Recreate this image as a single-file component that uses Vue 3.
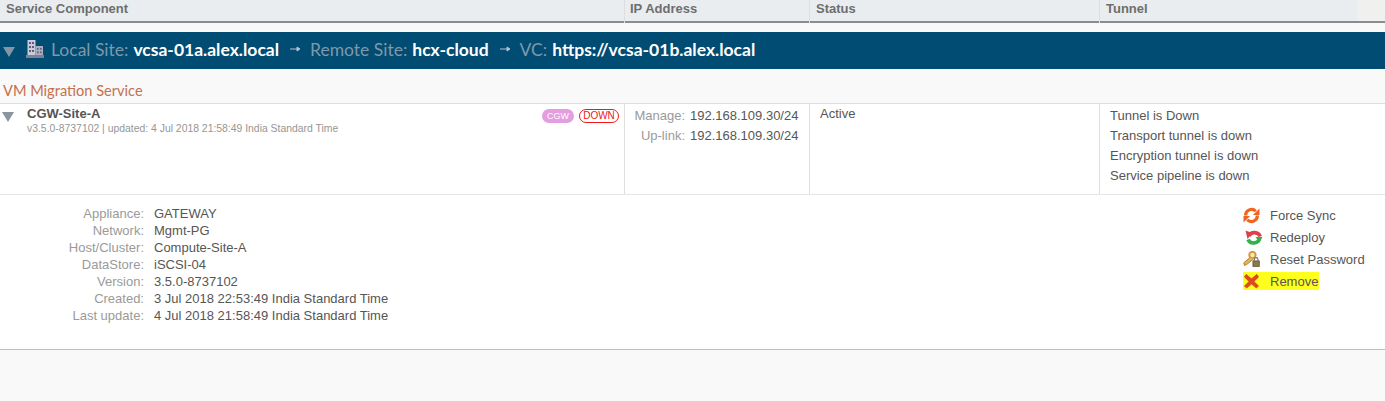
<script setup>
const headers = ['Service Component', 'IP Address', 'Status', 'Tunnel']
const tunnels = ['Tunnel is Down', 'Transport tunnel is down', 'Encryption tunnel is down', 'Service pipeline is down']
const details = [
  ['Appliance:', 'GATEWAY'],
  ['Network:', 'Mgmt-PG'],
  ['Host/Cluster:', 'Compute-Site-A'],
  ['DataStore:', 'iSCSI-04'],
  ['Version:', '3.5.0-8737102'],
  ['Created:', '3 Jul 2018 22:53:49 India Standard Time'],
  ['Last update:', '4 Jul 2018 21:58:49 India Standard Time'],
]
</script>

<template>
  <div class="page">
    <div class="head">
      <div class="cols">
        <div v-for="h in headers" :key="h" class="hcell">{{ h }}</div>
      </div>
    </div>

    <div class="banner">
      <span class="tri tri-banner"></span>
      <svg class="building" width="18" height="18" viewBox="0 0 18 18">
        <rect x="1.5" y="0" width="8" height="15" fill="#c9ccd6" />
        <rect x="9.5" y="6" width="7.5" height="9" fill="#a9adbd" />
        <rect x="0" y="15" width="18" height="3" fill="#7d8099" />
        <g fill="#5a5f80">
          <rect x="3" y="2" width="2" height="2" /><rect x="6" y="2" width="2" height="2" />
          <rect x="3" y="6" width="2" height="2" /><rect x="6" y="6" width="2" height="2" />
          <rect x="3" y="10" width="2" height="2" /><rect x="6" y="10" width="2" height="2" />
          <rect x="11" y="8" width="1.6" height="1.6" /><rect x="14" y="8" width="1.6" height="1.6" />
          <rect x="11" y="11.5" width="1.6" height="1.6" /><rect x="14" y="11.5" width="1.6" height="1.6" />
        </g>
      </svg>
      <span class="b-label">Local Site:</span>
      <span class="b-value">vcsa-01a.alex.local</span>
      <svg class="b-arrow" width="10" height="6" viewBox="0 0 10 6"><path d="M0 3 H9 M7 1 L10 3 L7 5 Z" stroke="#b3c2cc" fill="#b3c2cc" /></svg>
      <span class="b-label">Remote Site:</span>
      <span class="b-value">hcx-cloud</span>
      <svg class="b-arrow" width="10" height="6" viewBox="0 0 10 6"><path d="M0 3 H9 M7 1 L10 3 L7 5 Z" stroke="#b3c2cc" fill="#b3c2cc" /></svg>
      <span class="b-label">VC:</span>
      <span class="b-value">https://vcsa-01b.alex.local</span>
    </div>

    <div class="service-title">VM Migration Service</div>

    <div class="row">
      <div class="cell c-name">
        <span class="tri tri-row"></span>
        <div class="name-text">
          <div class="name">CGW-Site-A</div>
          <div class="sub">v3.5.0-8737102 | updated: 4 Jul 2018 21:58:49 India Standard Time</div>
        </div>
        <div class="badges">
          <span class="badge badge-cgw">CGW</span>
          <span class="badge badge-down">DOWN</span>
        </div>
      </div>
      <div class="cell c-ip">
        <div class="ip-line"><span class="ip-label">Manage:</span><span>192.168.109.30/24</span></div>
        <div class="ip-line"><span class="ip-label">Up-link:</span><span>192.168.109.30/24</span></div>
      </div>
      <div class="cell c-status">Active</div>
      <div class="cell c-tunnel">
        <div v-for="t in tunnels" :key="t" class="tunnel-line">{{ t }}</div>
      </div>
    </div>

    <div class="detail">
      <div class="facts">
        <template v-for="d in details" :key="d[0]">
          <span class="fact-label">{{ d[0] }}</span>
          <span class="fact-value">{{ d[1] }}</span>
        </template>
      </div>
      <div class="actions">
        <div class="action">
          <svg class="ic" width="17" height="17" viewBox="0 0 18 18" fill="none">
            <path d="M2.8 9 A6.2 6.2 0 0 1 13.5 4.5" stroke="#f0641e" stroke-width="3.4" />
            <path d="M10.5 8.5 L17.5 8.5 L17.5 1.5 Z" fill="#f0641e" />
            <path d="M15.2 9 A6.2 6.2 0 0 1 4.5 13.5" stroke="#f0641e" stroke-width="3.4" />
            <path d="M7.5 9.5 L0.5 9.5 L0.5 16.5 Z" fill="#f0641e" />
          </svg>
          <span>Force Sync</span>
        </div>
        <div class="action">
          <svg class="ic ic-shift" width="18" height="17" viewBox="0 0 18 17" fill="none">
            <path d="M4 7 A6 5.6 0 0 1 15.2 7.5" stroke="#d9424a" stroke-width="3.6" />
            <path d="M0.5 1.5 L7.5 4 L2.5 10 Z" fill="#d9424a" />
            <path d="M14.5 9 A6 5.6 0 0 1 3 10.5" stroke="#35b04a" stroke-width="3.6" />
            <path d="M10.5 8 L17.5 8 L14.5 13.5 Z" fill="#35b04a" />
          </svg>
          <span>Redeploy</span>
        </div>
        <div class="action">
          <svg class="ic" width="17" height="16" viewBox="0 0 18 17" fill="none">
            <circle cx="10" cy="4.2" r="3.4" stroke="#d29a3a" stroke-width="2" fill="#f7e6b0" />
            <path d="M8 6.5 L0.8 12.5 L1.5 15.5 L5 13.5 L10.5 9" fill="#e3b45a" stroke="#b07c26" stroke-width="1" />
            <rect x="10.5" y="10.5" width="6.8" height="6" fill="#8a7a4a" stroke="#5f5330" stroke-width="0.8" />
            <path d="M11.9 10.5 V9 A2 2 0 0 1 15.9 9 V10.5" stroke="#77705c" stroke-width="1.2" />
          </svg>
          <span>Reset Password</span>
        </div>
        <div class="action action-remove">
          <svg class="ic" width="16" height="16" viewBox="0 0 18 18">
            <path d="M3 1.5 L9 6.5 L15 1.5 L17 4.5 L11.8 9.5 L17 14.5 L14.5 17 L9 12.5 L3.5 17 L1 14.5 L6.2 9.5 L1 4.5 Z" fill="#e2491a" stroke="#b8391a" stroke-width="0.6" />
          </svg>
          <span>Remove</span>
        </div>
      </div>
    </div>
  </div>
</template>

<style scoped>
.page {
  height: 401px;
  overflow: hidden;
  background: #f9f9f9;
  font-family: "Liberation Sans", Arial, sans-serif;
  font-size: 13px;
  color: #565656;
}
.head {
  height: 21px;
  background: linear-gradient(to right, #e9edf0 1357px, #f0f0ee 1357px);
  border-bottom: 2px solid #8c8c8c;
}
.cols {
  display: grid;
  grid-template-columns: 624px 185px 290px 1fr;
  height: 100%;
}
.hcell {
  padding: 1px 0 0 6px;
  height: 23px;
  font-weight: 700;
  line-height: 15px;
  color: #6e6e6e;
  border-left: 1px solid #dcdfe2;
  box-sizing: border-box;
  margin-bottom: -2px;
}
.hcell:first-child { border-left: 0; }
.hcell:nth-child(2) { padding-left: 5px; }
.banner {
  margin-top: 9px;
  height: 37px;
  box-sizing: border-box;
  padding-bottom: 2px;
  display: flex;
  align-items: center;
  background: #004c73;
  font-family: Lato, "Liberation Sans", sans-serif;
  font-size: 17.5px;
  white-space: nowrap;
}
.tri {
  width: 0;
  height: 0;
  border-style: solid;
  border-color: #8296a6 transparent transparent;
}
.tri-banner {
  margin: 5px 0 0 3px;
  border-width: 10px 6px 0;
}
.building { margin: 0 7px 0 11px; position: relative; top: -1px; }
.b-label { color: #7f98a9; margin-right: 5px; }
.b-value { color: #fff; font-weight: 700; }
.b-arrow { margin: 0 10px 2px 11px; }
.service-title {
  height: 35px;
  box-sizing: border-box;
  padding: 13px 0 0 3px;
  font-family: Lato, "Liberation Sans", sans-serif;
  font-size: 14.6px;
  line-height: 17px;
  color: #c4704e;
  border-bottom: 1px solid #dedede;
}
.row {
  display: grid;
  grid-template-columns: 624px 185px 290px 1fr;
  height: 91px;
  box-sizing: border-box;
  background: #fff;
  border-bottom: 1px solid #e6e6e6;
}
.cell { line-height: 20px; box-sizing: border-box; }
.c-name { display: flex; position: relative; }
.tri-row {
  margin: 8px 0 0 2px;
  border-width: 10px 6px 0;
  border-top-color: #8a969e;
}
.name-text { margin-left: 13px; }
.name { margin-top: 2px; font-weight: 700; line-height: 16px; color: #555; }
.sub { font-size: 10.4px; line-height: 13px; margin-top: 0; color: #969696; }
.badges {
  position: absolute;
  top: 5px;
  right: 5px;
  display: flex;
  gap: 5px;
}
.badge {
  height: 14px;
  border-radius: 7px;
  font-size: 10px;
  line-height: 14px;
  text-align: center;
  box-sizing: border-box;
}
.badge-cgw { width: 32px; background: #e39de0; color: #fff; font-size: 9px; }
.badge-down { width: 40px; border: 1px solid #f01818; line-height: 12px; color: #e81818; }
.c-ip { border-left: 1px solid #dedede; padding-top: 2px; }
.ip-line { display: grid; grid-template-columns: 60px auto; column-gap: 5px; }
.ip-label { text-align: right; color: #9a9a9a; }
.c-status { border-left: 1px solid #dedede; padding: 0 0 0 10px; }
.c-tunnel { border-left: 1px solid #dedede; padding: 2px 0 0 10px; }
.detail {
  height: 155px;
  box-sizing: border-box;
  background: #fff;
  border-bottom: 1px solid #bdbdbd;
  display: flex;
  justify-content: space-between;
  padding-top: 10px;
}
.facts {
  display: grid;
  grid-template-columns: 144px auto;
  column-gap: 10px;
  grid-auto-rows: 17px;
  align-content: start;
  line-height: 17px;
}
.fact-label { text-align: right; color: #9a9a9a; }
.actions { width: 142px; margin-top: -1px; }
.action {
  display: flex;
  align-items: center;
  height: 22px;
  gap: 10px;
}
.ic { flex: none; width: 17px; }
.ic-shift { width: 18px; margin: 0 -3px 0 2px; }
.action-remove { background: linear-gradient(#ffff1e, #ffff1e) no-repeat 0 2px / 76px 18px; }
</style>

<style>
html, body { margin: 0; background: #f9f9f9; }
</style>
